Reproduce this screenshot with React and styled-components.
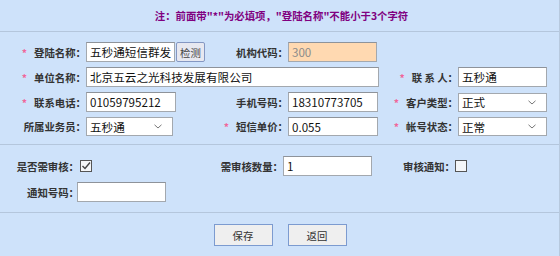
import React from "react";
import styled, { createGlobalStyle } from "styled-components";

const GlobalStyle = createGlobalStyle`
  html, body {
    margin: 0;
    padding: 0;
    background: #cee2fa;
  }
  * {
    box-sizing: border-box;
  }
`;

const FONT = `"Noto Sans CJK SC", "Liberation Sans", sans-serif`;

const Page = styled.div`
  width: 560px;
  height: 256px;
  background: #cee2fa;
  border-right: 1px solid #b7c9de;
  font-family: ${FONT};
  color: #333;
  overflow: hidden;
`;

const Notice = styled.div`
  height: 31px;
  display: flex;
  align-items: center;
  justify-content: center;
  padding-left: 4px;
  color: #800080;
  font-size: 10.4px;
  font-weight: bold;
`;

const Section = styled.div`
  border-top: 1px solid #b4c6dc;
  padding: ${(props) => props.$pad};
`;

const FormGrid = styled.div`
  display: grid;
  grid-template-columns: ${(props) => props.$cols};
  row-gap: ${(props) => props.$gap}px;
  align-items: center;
`;

const Label = styled.div`
  font-size: 10.4px;
  font-weight: bold;
  color: #333;
  text-align: right;
  white-space: nowrap;
  padding-right: ${(props) => props.$pr || 0}px;
`;

const Star = styled.span`
  color: #f0679a;
  margin-right: 7px;
`;

const Cell = styled.div`
  display: flex;
  align-items: center;
  grid-column: ${(props) => props.$span || "auto"};
`;

const TextInput = styled.input`
  width: ${(props) => props.$w}px;
  height: ${(props) => props.$h || 20}px;
  margin-left: ${(props) => props.$ml || 0}px;
  padding: 0 3px;
  border: 1px solid #a3a8ae;
  border-top-color: #8e939a;
  background: ${(props) => (props.$tone === "locked" ? "#ffd9b1" : "#fff")};
  color: ${(props) => (props.$tone === "locked" ? "#8a8a8a" : "#111")};
  font-family: ${FONT};
  font-size: 11.6px;
  outline: none;
`;

const CheckButton = styled.button`
  height: 20px;
  width: 29px;
  margin-left: 1px;
  padding: 0;
  border: 1px solid #8497c2;
  border-radius: 2px;
  background: #e7e8f0;
  color: #444;
  font-family: ${FONT};
  font-size: 10.4px;
`;

const SelectBox = styled.div`
  width: ${(props) => props.$w}px;
  height: 19px;
  display: flex;
  align-items: center;
  justify-content: space-between;
  padding: 0 10px 0 3px;
  border: 1px solid #a3a8ae;
  background: #fff;
  color: #111;
  font-size: 11.6px;
`;

const Chevron = () => (
  <svg width="8" height="5" viewBox="0 0 8 5">
    <path d="M0.5 0.8 L4 4 L7.5 0.8" fill="none" stroke="#777" strokeWidth="1" />
  </svg>
);

const Select = ({ value, w }) => (
  <SelectBox $w={w}>
    <span>{value}</span>
    <Chevron />
  </SelectBox>
);

const Box = styled.span`
  width: 12px;
  height: 12px;
  margin-left: ${(props) => props.$ml || 0}px;
  display: inline-flex;
  align-items: center;
  justify-content: center;
  border: 1px solid #555;
  background: #f4f6f8;
`;

const Checkbox = ({ checked, ml }) => (
  <Box $ml={ml}>
    {checked && (
      <svg width="10" height="10" viewBox="0 0 10 10">
        <path d="M1.5 5 L4 7.5 L9 1.5" fill="none" stroke="#444" strokeWidth="1.4" />
      </svg>
    )}
  </Box>
);

const ButtonBar = styled.div`
  display: flex;
  justify-content: center;
  gap: 15px;
  padding-left: 1px;
`;

const Button = styled.button`
  width: 59px;
  height: 22px;
  padding: 0;
  border: 1px solid #7c9bd0;
  background: #efefef;
  color: #333;
  font-family: ${FONT};
  font-size: 10.4px;
`;

const Req = ({ children }) => (
  <>
    <Star>*</Star>
    {children}
  </>
);

export default function App() {
  return (
    <Page>
      <GlobalStyle />
      <Notice>注：前面带"*"为必填项，"登陆名称"不能小于3个字符</Notice>

      <Section $pad="10px 0 8px">
        <FormGrid $cols="86px 124px 78px 92px 78px 90px" $gap={5}>
          <Label><Req>登陆名称：</Req></Label>
          <Cell>
            <TextInput $w={89} defaultValue={'五秒通短信群发"'} />
            <CheckButton>检测</CheckButton>
          </Cell>
          <Label>机构代码：</Label>
          <Cell>
            <TextInput $w={89} $tone="locked" defaultValue="300" readOnly />
          </Cell>
          <div />
          <div />

          <Label><Req>单位名称：</Req></Label>
          <Cell $span="2 / span 3">
            <TextInput $w={293} defaultValue="北京五云之光科技发展有限公司" />
          </Cell>
          <Label><Req>联&nbsp;系&nbsp;人：</Req></Label>
          <Cell>
            <TextInput $w={89} defaultValue="五秒通" />
          </Cell>

          <Label><Req>联系电话：</Req></Label>
          <Cell>
            <TextInput $w={90} defaultValue="01059795212" />
          </Cell>
          <Label>手机号码：</Label>
          <Cell>
            <TextInput $w={90} defaultValue="18310773705" />
          </Cell>
          <Label><Req>客户类型：</Req></Label>
          <Cell>
            <Select w={89} value="正式" />
          </Cell>

          <Label>所属业务员：</Label>
          <Cell>
            <Select w={87} value="五秒通" />
          </Cell>
          <Label><Req>短信单价：</Req></Label>
          <Cell>
            <TextInput $w={90} $h={19} defaultValue="0.055" />
          </Cell>
          <Label><Req>帐号状态：</Req></Label>
          <Cell>
            <Select w={89} value="正常" />
          </Cell>
        </FormGrid>
      </Section>

      <Section $pad="11px 0 10px">
        <FormGrid $cols="79px 141px 63px 120px 52px 1fr" $gap={6}>
          <Label>是否需审核：</Label>
          <Cell>
            <Checkbox checked ml={1} />
          </Cell>
          <Label>需审核数量：</Label>
          <Cell>
            <TextInput $w={89} defaultValue="1" />
          </Cell>
          <Label>审核通知：</Label>
          <Cell>
            <Checkbox />
          </Cell>

          <Label>通知号码：</Label>
          <Cell>
            <TextInput $w={89} $ml={-2} defaultValue="" />
          </Cell>
        </FormGrid>
      </Section>

      <Section $pad="11px 0 0">
        <ButtonBar>
          <Button>保存</Button>
          <Button>返回</Button>
        </ButtonBar>
      </Section>
    </Page>
  );
}
